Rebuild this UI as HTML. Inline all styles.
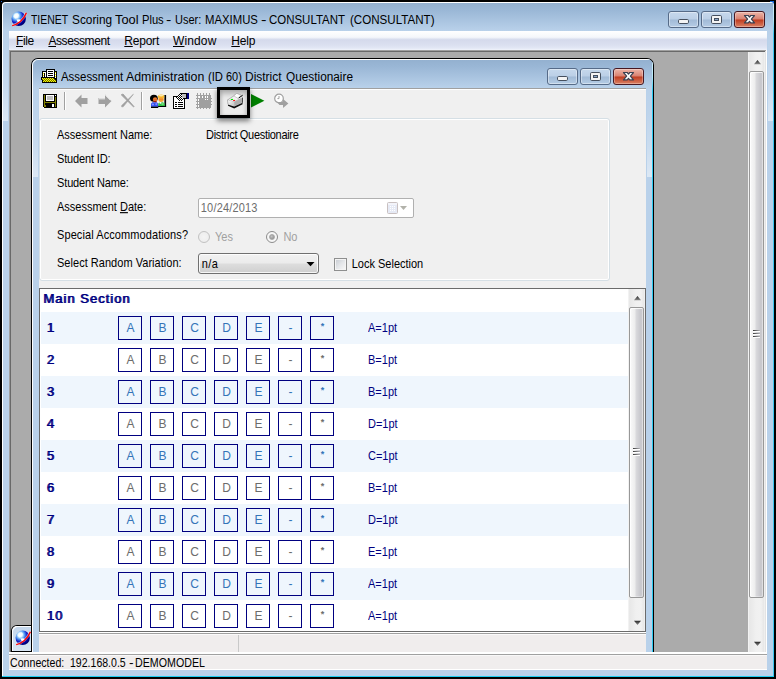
<!DOCTYPE html>
<html>
<head>
<meta charset="utf-8">
<title>TIENET Scoring Tool Plus</title>
<style>
html,body{margin:0;padding:0;background:#000;}
body{width:776px;height:679px;background:#000;overflow:hidden;position:relative;font-family:"Liberation Sans",sans-serif;font-size:11px;color:#000;}
.a{position:absolute;}
.t{position:absolute;white-space:nowrap;line-height:1;}
.ui{font-size:12px;}
.fh{position:absolute;width:5px;height:90px;background:linear-gradient(rgba(255,255,255,0) 0,rgba(255,255,255,.07) 30%,rgba(255,255,255,.24) 65%,rgba(255,255,255,.5) 100%);}
.w{position:absolute;top:0;white-space:pre;line-height:1;transform-origin:0 84.6%;}
.u{text-decoration:underline;}
#win{left:2px;top:2px;width:772px;height:675px;background:#b9d1ea;border-radius:4px 4px 0 0;overflow:hidden;}
#cap{left:0;top:0;width:772px;height:30px;background:linear-gradient(#93b0cf 0px,#9ab7d6 8px,#b9d1ea 29px);}
#hl{left:0;top:0;width:771px;height:674px;border-left:1px solid #fff;border-top:1px solid #fff;border-radius:4px 0 0 0;}
#cyr{right:0;top:0;width:1px;height:675px;background:linear-gradient(#d4f1fb 0,#b4e8f8 18px,#3cc7f0 32px);}
#cyb{left:0;bottom:0;width:772px;height:1px;background:#1ccdf2;}
.cb{position:absolute;width:29px;height:15px;border:1px solid #566b88;border-radius:3px;box-shadow:inset 0 0 0 1px rgba(255,255,255,.4);background:linear-gradient(#c6d8ec 0,#bbcfe6 48%,#a1bad6 52%,#b5cce5 100%);}
.cb.x{border-color:#471822;background:linear-gradient(#ecb5a8 0,#d9806f 48%,#bf3b1f 52%,#da8164 100%);box-shadow:inset 0 0 0 1px rgba(255,255,255,.3);}
.cb svg{position:absolute;left:0;top:0;}
#menu{left:9px;top:31px;width:758px;height:19px;background:linear-gradient(#ffffff 0,#f5f7fb 6px,#edf0f8 7px,#dadfef 8px,#d5daec 9px,#dbe0f0 14px,#e2e7f5 17px,#e9edf8 18px,#f0f3fa 19px);}
#mdi{left:9px;top:50px;width:758px;height:604px;background:#ababab;}
.sb{position:absolute;width:17px;background:linear-gradient(90deg,#fcfcfc 0,#e8e8e8 1px,#e9e9e9 3px,#f0f0f0 8px,#f1f1f1 13px,#e6e6e6 16px,#f8f8f8 17px);}
.thumb{position:absolute;left:1px;width:13px;border:1px solid #989898;border-radius:2px;background:linear-gradient(90deg,#fafafa 0,#ededed 5px,#dadadd 6px,#c6c6cb 11px,#d4d4d8 13px);box-shadow:inset 1px 1px 0 rgba(255,255,255,.8),inset -1px -1px 0 rgba(255,255,255,.3);}
.grip{position:absolute;left:3px;width:7px;height:9px;background:linear-gradient(#fff,#fff) 0 1px/7px 1px no-repeat,linear-gradient(#fff,#fff) 0 4px/7px 1px no-repeat,linear-gradient(#fff,#fff) 0 7px/7px 1px no-repeat,linear-gradient(90deg,#3a3a3a,#b4b4b8) 0 0/7px 1px no-repeat,linear-gradient(90deg,#3a3a3a,#b4b4b8) 0 3px/7px 1px no-repeat,linear-gradient(90deg,#3a3a3a,#b4b4b8) 0 6px/7px 1px no-repeat;}
#status{left:9px;top:655px;width:758px;height:15px;background:#f0eded;border-bottom:1px solid #fff;border-top:1px solid #f9f8f8;box-sizing:border-box;}
/* child */
#child{left:31px;top:58px;width:623px;height:594px;background:#000;border-radius:7px 7px 0 0;}
#cfr{left:32px;top:59px;width:621px;height:593px;background:#b9d1ea;border-radius:6px 6px 0 0;overflow:hidden;}
#ccap{left:0;top:0;width:621px;height:30px;background:linear-gradient(#93b0cf 0px,#9ab7d6 8px,#b9d1ea 29px);}
#chl{left:0;top:0;width:620px;height:592px;border-left:1px solid #fff;border-top:1px solid #fff;border-radius:6px 0 0 0;}
#ccy{right:0;top:0;width:1px;height:593px;background:linear-gradient(#d4f1fb 0,#b4e8f8 18px,#2ccaf1 32px);}
#cli{left:39px;top:88px;width:607px;height:564px;background:#f0f0f0;}
.sep{position:absolute;width:1px;height:18px;background:#a0a0a0;box-shadow:1px 0 0 #fff;}
#hib{left:217px;top:87px;width:27px;height:25px;border:3px solid #000;background:#ececec;box-shadow:0 3px 5px rgba(0,0,0,.5);z-index:5;}
#hib i{position:absolute;left:0;top:0;width:27px;height:25px;box-shadow:inset 0 4px 5px rgba(0,0,0,.24),inset 2px 0 3px rgba(0,0,0,.08),inset -2px 0 3px rgba(0,0,0,.05);}
#grp{left:39px;top:118px;width:569px;height:161px;border:1px solid #d5dfe5;border-radius:3px;box-shadow:inset 0 0 0 1px #fff;}
.lbl,.dis,.sy,.pt{transform:scaleY(1.13);transform-origin:0 9.3px;}
.lbl{color:#000;}
.dis{color:#a0a0a0;}
#date{left:198px;top:198px;width:214px;height:18px;border:1px solid #b0b0b0;border-radius:2px;background:#fff;}
#combo{left:198px;top:253px;width:119px;height:19px;border:1px solid #707070;border-radius:3px;background:linear-gradient(#f2f2f2 0,#ebebeb 48%,#dddddd 52%,#cfcfcf 100%);box-shadow:inset 0 0 0 1px rgba(255,255,255,.8);}
.radio{position:absolute;width:10px;height:10px;border:1px solid #c2c2c2;border-radius:50%;background:radial-gradient(circle at 50% 50%,#f4f4f4 0,#efefef 60%,#e4e4e4 100%);}
#chk{left:334px;top:258px;width:11px;height:11px;border:1px solid #8e8f8f;background:#f4f4f4;}
#chk i{position:absolute;left:1px;top:1px;width:9px;height:9px;background:linear-gradient(135deg,#cbcfd5 0,#e4e6e9 50%,#f6f6f6 100%);border:0;}
#list{left:39px;top:288px;width:605px;height:342px;border:1px solid #6b6b6b;background:#fff;box-shadow:0 1px 0 #fff;}
.row{position:absolute;left:41px;width:587px;height:32px;background:#eff6fd;}
.ab{position:absolute;width:22px;height:22px;border:1px solid #000080;text-align:center;line-height:22px;font-size:12px;text-indent:1px;}
.o .ab,.ab.o{color:#3474b8;}
.ab.e{color:#6c6c6c;}
.num{position:absolute;white-space:nowrap;line-height:1;font-size:13px;font-weight:normal;color:#000080;letter-spacing:1px;text-shadow:1px 0 0 #000080;}
.pt{position:absolute;white-space:nowrap;line-height:1;color:#000080;}
</style>
</head>
<body>
<div class="a" style="left:770px;top:1px;width:4px;height:4px;background:#1565d8"></div><div class="a" style="left:1px;top:1px;width:1px;height:1px;background:#1565d8"></div><div id="win" class="a"><div id="cap" class="a"></div><div id="hl" class="a"></div><div id="cyr" class="a"></div><div id="cyb" class="a"></div></div>
<div class="fh" style="left:3px;top:31px"></div><div class="fh" style="left:768px;top:31px"></div>
<svg class="a" style="left:11px;top:11px" width="17" height="16" viewBox="0 0 17 16">
<defs><radialGradient id="g1" cx="0.33" cy="0.3" r="0.75"><stop offset="0" stop-color="#ffffff"/><stop offset="0.22" stop-color="#c8ecff"/><stop offset="0.42" stop-color="#4a90f0"/><stop offset="0.62" stop-color="#1420c8"/><stop offset="0.85" stop-color="#000090"/><stop offset="1" stop-color="#000068"/></radialGradient></defs>
<circle cx="7.7" cy="7.8" r="7.2" fill="url(#g1)"/>
<path d="M2.5 5.5 L4 3 L6.5 2.2 L8 4 L6.8 6.5 L4.5 7.5 Z" fill="#ffffff" opacity=".75"/>
<path d="M5.5 8.6 L8.5 8.2 L10 9.6 L9 11.4 L6.6 11 Z" fill="#fff"/>
<path d="M1.4 14.2 C6.8 13.2 12.6 8.6 15.2 1.8" fill="none" stroke="#ffffff" stroke-width="2.4" opacity=".55"/>
<path d="M1.2 14.6 C6.8 13.6 12.8 9 15.4 1.8" fill="none" stroke="#ff0000" stroke-width="1.4"/>
</svg><div class="a ui" id="title" style="left:0;top:14px;width:0;height:0;"><span class="w" style="left:30.7px;transform:scale(0.8694,1.0)">TIENET </span><span class="w" style="left:71.7px;transform:scale(0.9856,1.0)">Scoring </span><span class="w" style="left:115.0px;transform:scale(1.0674,1.0)">Tool </span><span class="w" style="left:142.1px;transform:scale(0.9296,1.0)">Plus </span><span class="w" style="left:166.4px;transform:scale(1.3250,1.0)">- </span><span class="w" style="left:174.8px;transform:scale(0.9173,1.0)">User: </span><span class="w" style="left:204.6px;transform:scale(0.9444,1.0)">MAXIMUS </span><span class="w" style="left:261.4px;transform:scale(1.3750,1.0)">- </span><span class="w" style="left:269.2px;transform:scale(0.9552,1.0)">CONSULTANT </span><span class="w" style="left:349.5px;transform:scale(0.9650,1.0)">(CONSULTANT)</span></div>
<div class="cb" style="left:668px;top:11px"><svg width="29" height="15" viewBox="0 0 29 15"><rect x="9.5" y="7.5" width="10" height="4" rx="1.2" fill="#f4f4f4" stroke="#454f5e"/></svg></div><div class="cb" style="left:701px;top:11px"><svg width="29" height="15" viewBox="0 0 29 15"><rect x="9.5" y="3.5" width="10" height="8" rx="1.2" fill="#f4f4f4" stroke="#454f5e"/><rect x="12.5" y="6.5" width="4" height="2" fill="#8aa6c9" stroke="#454f5e"/></svg></div><div class="cb x" style="left:734px;top:11px"><svg width="29" height="15" viewBox="0 0 29 15"><path d="M9.5 3.5 H13.2 L14.5 5.1 L15.8 3.5 H19.5 L16.4 7.2 L19.5 10.9 H15.8 L14.5 9.3 L13.2 10.9 H9.5 L12.6 7.2 Z" fill="#fafafa" stroke="#3b4252" stroke-width="1.2" stroke-linejoin="round"/></svg></div>
<div id="menu" class="a"></div>
<div class="t ui" id="m_File" style="left:16px;top:35px;letter-spacing:-0.35px"><span class="u">F</span>ile</div><div class="t ui" id="m_Assessment" style="left:48.4px;top:35px;letter-spacing:-0.42px"><span class="u">A</span>ssessment</div><div class="t ui" id="m_Report" style="left:124.3px;top:35px;letter-spacing:-0.22px"><span class="u">R</span>eport</div><div class="t ui" id="m_Window" style="left:173px;top:35px;letter-spacing:0.13px"><span class="u">W</span>indow</div><div class="t ui" id="m_Help" style="left:231.3px;top:35px;letter-spacing:-0.15px"><span class="u">H</span>elp</div>
<div id="mdi" class="a"></div>
<div class="a" style="left:9px;top:50px;width:758px;height:1px;background:#a0a0a0"></div><div class="a" style="left:9px;top:50px;width:1px;height:602px;background:#a0a0a0"></div><div class="a" style="left:10px;top:51px;width:756px;height:1px;background:#696969"></div><div class="a" style="left:10px;top:51px;width:1px;height:601px;background:#696969"></div><div class="a" style="left:765px;top:51px;width:1px;height:602px;background:#e3e3e3"></div><div class="a" style="left:766px;top:50px;width:1px;height:604px;background:#fff"></div><div class="a" style="left:9px;top:652px;width:758px;height:2px;background:#fff"></div><div class="a" style="left:9px;top:654px;width:758px;height:1px;background:#a0a0a0"></div>
<div class="sb" style="left:748px;top:52px;height:600px"><svg class="a" style="left:0;top:1px" width="17" height="17" viewBox="0 0 17 17"><defs><linearGradient id="ag748" x1="0" y1="0" x2="0" y2="1"><stop offset="0" stop-color="#2a2a2a"/><stop offset="1" stop-color="#8a8a8a"/></linearGradient></defs><path d="M6 11.2 L9.5 7.1 L13 11.2 Z" fill="url(#ag748)"/></svg><svg class="a" style="left:0;top:583px" width="17" height="17" viewBox="0 0 17 17"><defs><linearGradient id="ah748" x1="0" y1="0" x2="0" y2="1"><stop offset="0" stop-color="#2a2a2a"/><stop offset="1" stop-color="#8a8a8a"/></linearGradient></defs><path d="M6 6.8 L9.5 10.9 L13 6.8 Z" fill="url(#ah748)"/></svg><div class="thumb" style="top:19px;height:525px"><div class="grip" style="top:258px"></div></div></div>
<div class="a" style="left:11px;top:625px;width:21px;height:27px;background:#000;border-radius:6px 0 0 0"></div><div class="a" style="left:12px;top:626px;width:19px;height:25px;background:linear-gradient(#c3d6ec,#d8e5f2);border-radius:5px 0 0 0;box-shadow:inset 1px 1px 0 #fff"></div><svg class="a" style="left:15px;top:630px" width="17" height="16" viewBox="0 0 17 16">
<defs><radialGradient id="g2" cx="0.33" cy="0.3" r="0.75"><stop offset="0" stop-color="#ffffff"/><stop offset="0.22" stop-color="#c8ecff"/><stop offset="0.42" stop-color="#4a90f0"/><stop offset="0.62" stop-color="#1420c8"/><stop offset="0.85" stop-color="#000090"/><stop offset="1" stop-color="#000068"/></radialGradient></defs>
<circle cx="7.7" cy="7.8" r="7.2" fill="url(#g2)"/>
<path d="M2.5 5.5 L4 3 L6.5 2.2 L8 4 L6.8 6.5 L4.5 7.5 Z" fill="#ffffff" opacity=".75"/>
<path d="M5.5 8.6 L8.5 8.2 L10 9.6 L9 11.4 L6.6 11 Z" fill="#fff"/>
<path d="M1.4 14.2 C6.8 13.2 12.6 8.6 15.2 1.8" fill="none" stroke="#ffffff" stroke-width="2.4" opacity=".55"/>
<path d="M1.2 14.6 C6.8 13.6 12.8 9 15.4 1.8" fill="none" stroke="#ff0000" stroke-width="1.4"/>
</svg>
<div id="status" class="a"></div><div class="a " id="st" style="left:0;top:658px;width:0;height:0;"><span class="w" style="left:10.4px;transform:scale(0.9651,1.13)">Connected: </span><span class="w" style="left:69.9px;transform:scale(0.9583,1.13)">192.168.0.5 </span><span class="w" style="left:128.6px;transform:scale(1.2528,1.13)">- </span><span class="w" style="left:135.4px;transform:scale(0.9705,1.13)">DEMOMODEL</span></div>
<div id="child" class="a"></div><div id="cfr" class="a"><div id="ccap" class="a"></div><div id="chl" class="a"></div><div id="ccy" class="a"></div></div>
<div class="fh" style="left:33px;top:87px"></div><div class="fh" style="left:647px;top:87px"></div>
<div id="cli" class="a"></div><div class="a" style="left:39px;top:88px;width:607px;height:1px;background:#a0a0a0"></div><div class="a" style="left:39px;top:89px;width:607px;height:1px;background:#fff"></div>
<svg class="a" style="left:41px;top:69px" width="16" height="14" viewBox="0 0 16 14" shape-rendering="crispEdges"><rect x="5" y="0" width="9" height="1" fill="#000"/><rect x="5" y="1" width="1" height="7" fill="#000"/><rect x="13" y="1" width="1" height="7" fill="#000"/><rect x="6" y="1" width="7" height="7" fill="#fff"/><rect x="7" y="2" width="5" height="1" fill="#000"/><rect x="7" y="4" width="5" height="1" fill="#000"/><rect x="7" y="6" width="5" height="1" fill="#000"/><rect x="1" y="2" width="4" height="1" fill="#000"/><rect x="1" y="3" width="1" height="6" fill="#000"/><rect x="2" y="3" width="3" height="1" fill="#fff"/><rect x="2" y="4" width="1" height="1" fill="#ffff00"/><rect x="2" y="5" width="1" height="1" fill="#fff"/><rect x="2" y="6" width="1" height="1" fill="#ffff00"/><rect x="2" y="7" width="1" height="1" fill="#fff"/><rect x="3" y="4" width="1" height="4" fill="#000"/><rect x="4" y="4" width="1" height="4" fill="#fff"/><rect x="14" y="2" width="2" height="1" fill="#000"/><rect x="15" y="3" width="1" height="11" fill="#000"/><rect x="14" y="3" width="1" height="1" fill="#ffff00"/><rect x="14" y="4" width="1" height="1" fill="#fff"/><rect x="14" y="5" width="1" height="1" fill="#ffff00"/><rect x="14" y="6" width="1" height="1" fill="#fff"/><rect x="14" y="7" width="1" height="1" fill="#ffff00"/><rect x="14" y="8" width="1" height="1" fill="#fff"/><rect x="14" y="9" width="1" height="1" fill="#000"/><rect x="0" y="8" width="14" height="1" fill="#000"/><rect x="0" y="9" width="15" height="2" fill="#000"/><rect x="1" y="11" width="14" height="2" fill="#000"/><rect x="1" y="13" width="15" height="1" fill="#000"/><rect x="1" y="9" width="1" height="1" fill="#ffff00"/><rect x="2" y="9" width="1" height="1" fill="#6a6a00"/><rect x="3" y="9" width="1" height="1" fill="#ffff00"/><rect x="4" y="9" width="1" height="1" fill="#6a6a00"/><rect x="5" y="9" width="1" height="1" fill="#ffff00"/><rect x="6" y="9" width="1" height="1" fill="#6a6a00"/><rect x="7" y="9" width="1" height="1" fill="#ffff00"/><rect x="8" y="9" width="1" height="1" fill="#6a6a00"/><rect x="9" y="9" width="1" height="1" fill="#ffff00"/><rect x="10" y="9" width="1" height="1" fill="#6a6a00"/><rect x="11" y="9" width="1" height="1" fill="#ffff00"/><rect x="12" y="9" width="1" height="1" fill="#6a6a00"/><rect x="1" y="10" width="1" height="1" fill="#6a6a00"/><rect x="2" y="10" width="1" height="1" fill="#ffff00"/><rect x="3" y="10" width="1" height="1" fill="#6a6a00"/><rect x="4" y="10" width="1" height="1" fill="#ffff00"/><rect x="5" y="10" width="1" height="1" fill="#6a6a00"/><rect x="6" y="10" width="1" height="1" fill="#ffff00"/><rect x="7" y="10" width="1" height="1" fill="#6a6a00"/><rect x="8" y="10" width="1" height="1" fill="#ffff00"/><rect x="9" y="10" width="1" height="1" fill="#6a6a00"/><rect x="10" y="10" width="1" height="1" fill="#ffff00"/><rect x="11" y="10" width="1" height="1" fill="#6a6a00"/><rect x="12" y="10" width="1" height="1" fill="#ffff00"/><rect x="13" y="10" width="1" height="1" fill="#6a6a00"/><rect x="2" y="11" width="1" height="1" fill="#6a6a00"/><rect x="3" y="11" width="1" height="1" fill="#ffff00"/><rect x="4" y="11" width="1" height="1" fill="#6a6a00"/><rect x="5" y="11" width="1" height="1" fill="#ffff00"/><rect x="6" y="11" width="1" height="1" fill="#6a6a00"/><rect x="7" y="11" width="1" height="1" fill="#ffff00"/><rect x="8" y="11" width="1" height="1" fill="#6a6a00"/><rect x="9" y="11" width="1" height="1" fill="#ffff00"/><rect x="10" y="11" width="1" height="1" fill="#6a6a00"/><rect x="11" y="11" width="1" height="1" fill="#ffff00"/><rect x="12" y="11" width="1" height="1" fill="#6a6a00"/><rect x="13" y="11" width="1" height="1" fill="#ffff00"/><rect x="14" y="11" width="1" height="1" fill="#6a6a00"/><rect x="2" y="12" width="1" height="1" fill="#ffff00"/><rect x="3" y="12" width="1" height="1" fill="#6a6a00"/><rect x="4" y="12" width="1" height="1" fill="#ffff00"/><rect x="5" y="12" width="1" height="1" fill="#6a6a00"/><rect x="6" y="12" width="1" height="1" fill="#ffff00"/><rect x="7" y="12" width="1" height="1" fill="#6a6a00"/><rect x="8" y="12" width="1" height="1" fill="#ffff00"/><rect x="9" y="12" width="1" height="1" fill="#6a6a00"/><rect x="10" y="12" width="1" height="1" fill="#ffff00"/><rect x="11" y="12" width="1" height="1" fill="#6a6a00"/><rect x="12" y="12" width="1" height="1" fill="#ffff00"/><rect x="13" y="12" width="1" height="1" fill="#6a6a00"/><rect x="14" y="12" width="1" height="1" fill="#ffff00"/></svg><div class="a ui" id="ctitle" style="left:0;top:71px;width:0;height:0;"><span class="w" style="left:60.7px;transform:scale(0.9517,1.0)">Assessment </span><span class="w" style="left:125.6px;transform:scale(1.0298,1.0)">Administration </span><span class="w" style="left:208.2px;transform:scale(0.9375,1.0)">(ID </span><span class="w" style="left:225.9px;transform:scale(0.9110,1.0)">60) </span><span class="w" style="left:245.3px;transform:scale(0.9980,1.0)">District </span><span class="w" style="left:285.7px;transform:scale(0.9846,1.0)">Questionaire</span></div>
<div class="cb" style="left:547px;top:68px"><svg width="29" height="15" viewBox="0 0 29 15"><rect x="9.5" y="7.5" width="10" height="4" rx="1.2" fill="#f4f4f4" stroke="#454f5e"/></svg></div><div class="cb" style="left:580px;top:68px"><svg width="29" height="15" viewBox="0 0 29 15"><rect x="9.5" y="3.5" width="10" height="8" rx="1.2" fill="#f4f4f4" stroke="#454f5e"/><rect x="12.5" y="6.5" width="4" height="2" fill="#8aa6c9" stroke="#454f5e"/></svg></div><div class="cb x" style="left:613px;top:68px"><svg width="29" height="15" viewBox="0 0 29 15"><path d="M9.5 3.5 H13.2 L14.5 5.1 L15.8 3.5 H19.5 L16.4 7.2 L19.5 10.9 H15.8 L14.5 9.3 L13.2 10.9 H9.5 L12.6 7.2 Z" fill="#fafafa" stroke="#3b4252" stroke-width="1.2" stroke-linejoin="round"/></svg></div>
<svg class="a" style="left:43px;top:94px" width="14" height="14" viewBox="0 0 14 14" shape-rendering="crispEdges"><rect x="0" y="0" width="14" height="14" fill="#000"/><rect x="1" y="1" width="1" height="12" fill="#808000"/><rect x="12" y="3" width="1" height="10" fill="#808000"/><rect x="2" y="8" width="10" height="1" fill="#808000"/><rect x="1" y="11" width="2" height="2" fill="#808000"/><rect x="3" y="1" width="8" height="6" fill="#fff"/><rect x="4" y="2" width="6" height="4" fill="#c0c0c0"/><rect x="12" y="1" width="1" height="1" fill="#fff"/><rect x="0" y="13" width="1" height="1" fill="#fff"/><rect x="9" y="10" width="2" height="3" fill="#fff"/></svg><div class="sep" style="left:64px;top:92px"></div><svg class="a" style="left:75px;top:94px" width="13" height="14" viewBox="0 0 13 14"><path d="M0 7 L6.5 0.5 L6.5 4 L12.5 4 L12.5 10 L6.5 10 L6.5 13.5 Z" fill="#a0a0a0"/></svg><svg class="a" style="left:98px;top:94px" width="14" height="14" viewBox="0 0 14 14"><path d="M13.5 7 L7 0.5 L7 4 L0.5 4 L0.5 10 L7 10 L7 13.5 Z" fill="#a0a0a0"/><path d="M7.5 1.2 L12.6 6.3 M1 4.8 L7 4.8" stroke="#fff" stroke-width="0.9" fill="none"/></svg><svg class="a" style="left:120px;top:93px" width="16" height="16" viewBox="0 0 16 16"><path d="M1.2 1.8 L3 1 L14 13.6 L13.6 14 L1.2 1.8 Z" fill="#a0a0a0" stroke="#a0a0a0" stroke-width="0.8"/><path d="M13.4 1.2 L3.4 13.6 L1.8 14 L1.6 12.6 Z" fill="#a0a0a0" stroke="#a0a0a0" stroke-width="0.6"/></svg><div class="sep" style="left:141px;top:92px"></div>
<svg class="a" style="left:150px;top:94px" width="17" height="15" viewBox="0 0 17 15">
<rect x="14.4" y="1" width="1.7" height="11.8" fill="#000"/>
<rect x="8" y="11.8" width="8.1" height="1.2" fill="#000"/>
<rect x="1" y="12.2" width="7.2" height="1.8" fill="#000"/>
<ellipse cx="3.9" cy="4.3" rx="3.9" ry="3.5" fill="#000"/>
<ellipse cx="5.1" cy="5.5" rx="2.2" ry="2.3" fill="#f08030"/>
<rect x="3.2" y="4.8" width="3.8" height="1.1" fill="#d86424"/>
<ellipse cx="5.1" cy="7.7" rx="1.7" ry="0.9" fill="#a01808"/>
<ellipse cx="11.1" cy="2.7" rx="3.2" ry="2.1" fill="#f8c030"/>
<ellipse cx="11.1" cy="1.6" rx="2.2" ry="0.8" fill="#fce8b0"/>
<ellipse cx="11.1" cy="5.6" rx="2.7" ry="2.3" fill="#f8a030"/>
<rect x="9.2" y="4.9" width="3.8" height="1" fill="#f08828"/>
<path d="M1 12.5 L1 10 C1.5 8.4 3.2 8 4.6 8.7 C6 8 7.7 8.4 8.2 10 L8.2 12.5 Z" fill="#3050f0"/>
<ellipse cx="2.9" cy="10.4" rx="1.1" ry="1" fill="#8890ff"/>
<ellipse cx="6.3" cy="10.2" rx="1" ry="1.1" fill="#8088ff"/>
<path d="M8.2 12 L8.3 9.6 C9.2 7.9 13.6 7.9 14.5 9.6 L14.8 12 Z" fill="#30c040"/>
<ellipse cx="12.6" cy="10" rx="1.4" ry="1.1" fill="#70e080"/>
<ellipse cx="10.5" cy="8.8" rx="1" ry="0.9" fill="#fff"/>
</svg><svg class="a" style="left:173px;top:93px" width="17" height="16" viewBox="0 0 17 16" shape-rendering="crispEdges"><rect x="0" y="3" width="1" height="13" fill="#000"/><rect x="0" y="15" width="12" height="1" fill="#000"/><rect x="11" y="6" width="1" height="10" fill="#000"/><rect x="0" y="3" width="4" height="1" fill="#000"/><rect x="1" y="4" width="10" height="11" fill="#fff"/><rect x="2" y="9" width="2" height="1" fill="#000"/><rect x="5" y="9" width="5" height="1" fill="#000"/><rect x="2" y="11" width="2" height="1" fill="#000"/><rect x="5" y="11" width="5" height="1" fill="#000"/><rect x="2" y="13" width="2" height="1" fill="#000"/><rect x="5" y="13" width="5" height="1" fill="#000"/><rect x="7" y="0" width="1" height="1" fill="#000"/><rect x="6" y="1" width="1" height="1" fill="#000"/><rect x="7" y="1" width="1" height="1" fill="#fff"/><rect x="8" y="1" width="1" height="1" fill="#000"/><rect x="5" y="2" width="1" height="1" fill="#000"/><rect x="6" y="2" width="1" height="1" fill="#fff"/><rect x="7" y="2" width="1" height="1" fill="#000"/><rect x="8" y="2" width="1" height="1" fill="#fff"/><rect x="9" y="2" width="1" height="1" fill="#000"/><rect x="4" y="3" width="1" height="1" fill="#000"/><rect x="5" y="3" width="1" height="1" fill="#fff"/><rect x="6" y="3" width="1" height="1" fill="#000"/><rect x="7" y="3" width="1" height="1" fill="#fff"/><rect x="8" y="3" width="1" height="1" fill="#000"/><rect x="9" y="3" width="1" height="1" fill="#fff"/><rect x="10" y="3" width="1" height="1" fill="#000"/><rect x="3" y="4" width="1" height="1" fill="#000"/><rect x="4" y="4" width="1" height="1" fill="#fff"/><rect x="5" y="4" width="1" height="1" fill="#000"/><rect x="6" y="4" width="1" height="1" fill="#fff"/><rect x="7" y="4" width="1" height="1" fill="#000"/><rect x="8" y="4" width="1" height="1" fill="#fff"/><rect x="9" y="4" width="1" height="1" fill="#000"/><rect x="10" y="4" width="1" height="1" fill="#fff"/><rect x="11" y="4" width="1" height="1" fill="#000"/><rect x="4" y="5" width="1" height="1" fill="#000"/><rect x="5" y="5" width="1" height="1" fill="#fff"/><rect x="6" y="5" width="1" height="1" fill="#000"/><rect x="7" y="5" width="1" height="1" fill="#fff"/><rect x="8" y="5" width="1" height="1" fill="#000"/><rect x="9" y="5" width="1" height="1" fill="#fff"/><rect x="10" y="5" width="1" height="1" fill="#000"/><rect x="5" y="6" width="1" height="1" fill="#000"/><rect x="6" y="6" width="1" height="1" fill="#fff"/><rect x="7" y="6" width="1" height="1" fill="#000"/><rect x="8" y="6" width="1" height="1" fill="#fff"/><rect x="9" y="6" width="1" height="1" fill="#000"/><rect x="6" y="7" width="1" height="1" fill="#000"/><rect x="7" y="7" width="1" height="1" fill="#fff"/><rect x="8" y="7" width="1" height="1" fill="#000"/><rect x="9" y="1" width="4" height="4" fill="#c0c0c0"/><rect x="7" y="0" width="7" height="1" fill="#000"/><rect x="11" y="5" width="3" height="1" fill="#000"/><rect x="13" y="1" width="1" height="4" fill="#000"/><rect x="14" y="0" width="2" height="6" fill="#000080"/></svg><svg class="a" style="left:196px;top:93px" width="16" height="16" viewBox="0 0 16 16" shape-rendering="crispEdges"><rect x="3" y="3" width="12" height="12" fill="#a0a0a0"/><rect x="1" y="0" width="1" height="16" fill="#a0a0a0"/><rect x="0" y="2" width="16" height="1" fill="#a0a0a0"/><rect x="4" y="0" width="1" height="16" fill="#a0a0a0"/><rect x="0" y="5" width="16" height="1" fill="#a0a0a0"/><rect x="7" y="0" width="1" height="16" fill="#a0a0a0"/><rect x="0" y="8" width="16" height="1" fill="#a0a0a0"/><rect x="10" y="0" width="1" height="16" fill="#a0a0a0"/><rect x="0" y="11" width="16" height="1" fill="#a0a0a0"/><rect x="13" y="0" width="1" height="16" fill="#a0a0a0"/><rect x="0" y="14" width="16" height="1" fill="#a0a0a0"/><rect x="3" y="3" width="1" height="2" fill="#fff"/><rect x="6" y="3" width="1" height="2" fill="#fff"/><rect x="9" y="3" width="1" height="2" fill="#fff"/><rect x="11" y="3" width="1" height="2" fill="#fff"/><rect x="9" y="6" width="1" height="1" fill="#fff"/><rect x="11" y="6" width="1" height="1" fill="#fff"/><rect x="2" y="6" width="1" height="2" fill="#fff"/><rect x="2" y="9" width="1" height="2" fill="#fff"/><rect x="2" y="12" width="1" height="2" fill="#fff"/><rect x="15" y="2" width="1" height="1" fill="#f0f0f0"/><rect x="15" y="14" width="1" height="1" fill="#f0f0f0"/></svg><div id="hib" class="a"><i></i></div><svg class="a" style="left:227px;top:93px;z-index:6" width="17" height="16" viewBox="0 0 17 16">
<defs><linearGradient id="pl" x1="0" y1="0" x2="1" y2="1"><stop offset="0" stop-color="#ffffff"/><stop offset="1" stop-color="#bdbdbd"/></linearGradient></defs>
<path d="M0.5 7 L6.6 3 L9.7 0.4 L14 2.3 L15.5 4.8 L7.2 8.9 Z" fill="#f3f3f3" stroke="#8e8e8e" stroke-width=".6"/>
<path d="M6.8 2.9 L9.7 0.4 L14 2.3 L11 5.4 Z" fill="#ffffff" stroke="#a0a0a0" stroke-width=".5"/>
<path d="M0.5 7 L7.2 8.9 L7.2 13.3 L0.9 11 Z" fill="url(#pl)"/>
<path d="M7.2 8.9 L15.5 4.8 L15.5 9.6 L7.2 13.3 Z" fill="#adadad"/>
<path d="M0.5 7 L0.9 11.4 L7.2 13.6 L15.5 9.8 L15.6 11.2 L7.2 15.5 L1 12.8 Z" fill="#0c0c0c"/>
<path d="M0.5 7 L0.9 11" stroke="#8e8e8e" stroke-width=".6"/>
<path d="M11.7 5 L15.7 2.2" stroke="#000" stroke-width="1"/>
<path d="M15.5 4.8 L15.5 9.8" stroke="#222" stroke-width=".8"/>
<rect x="3.8" y="5.9" width="2.2" height="1.1" fill="#00e000"/>
<rect x="6.1" y="6.9" width="2" height="1.1" fill="#ff1010"/>
</svg><svg class="a" style="left:251px;top:94px" width="14" height="14" viewBox="0 0 14 14"><path d="M0 0 L13.4 6.7 L0 13.4 Z" fill="#008000"/></svg><svg class="a" style="left:274px;top:93px" width="15" height="16" viewBox="0 0 15 16">
<circle cx="5" cy="5.5" r="4.3" fill="#fff" stroke="#a0a0a0" stroke-width="1.2"/>
<path d="M5 3 L5 5.6 L3.4 5.6" fill="none" stroke="#a0a0a0" stroke-width="1"/>
<path d="M3 9 L9 9 L9 6 L14.4 10.5 L9 15 L9 12 L5.5 12 Z" fill="#a0a0a0"/>
</svg>
<div id="grp" class="a"></div>
<div class="t lbl" id="l0" style="left:57px;top:130px;letter-spacing:0px">Assessment Name:</div><div class="t lbl" id="l1" style="left:57px;top:154px;letter-spacing:-0.15px">Student ID:</div><div class="t lbl" id="l2" style="left:57px;top:178px;letter-spacing:-0.13px">Student Name:</div><div class="t lbl" id="l3" style="left:57px;top:202px;letter-spacing:0px">Assessment <span class="u">D</span>ate:</div><div class="t lbl" id="l4" style="left:57px;top:230px;letter-spacing:0.09px">Special Accommodations?</div><div class="t lbl" id="l5" style="left:57px;top:258px;letter-spacing:0.03px">Select Random Variation:</div><div class="t lbl" id="dq" style="left:206px;top:130px;letter-spacing:-0.31px">District Questionaire</div>
<div id="date" class="a"></div><div class="t dis" id="dt" style="left:200.8px;top:203px;color:#6d6d6d;letter-spacing:0.18px">10/24/2013</div><svg class="a" style="left:387px;top:202px" width="22" height="12" viewBox="0 0 22 12">
<rect x="0.5" y="0.5" width="10" height="11" rx="1" fill="#e6eaf5" stroke="#c9c0c0"/>
<rect x="1" y="1" width="9" height="2" fill="#f3f4fa"/>
<g fill="#fff"><rect x="3" y="4" width="1" height="1"/><rect x="5" y="4" width="1" height="1"/><rect x="7" y="4" width="1" height="1"/><rect x="3" y="6" width="1" height="1"/><rect x="5" y="6" width="1" height="1"/><rect x="7" y="6" width="1" height="1"/><rect x="3" y="8" width="1" height="1"/><rect x="5" y="8" width="1" height="1"/><rect x="7" y="8" width="1" height="1"/></g>
<path d="M13 4 L20 4 L16.5 8 Z" fill="#b2b2aa"/>
</svg><div class="radio" style="left:198px;top:231px"></div><div class="t dis" id="yes" style="left:215px;top:232px;">Yes</div><div class="radio" style="left:266px;top:231px;border-color:#8c8c8c;background:#f6f6f6"><div class="a" style="left:2px;top:2px;width:4px;height:4px;border:1px solid #a8a8a8;border-radius:50%;background:radial-gradient(circle at 40% 35%,#c4c4c4,#858585)"></div></div><div class="t dis" id="no" style="left:283.4px;top:232px;">No</div><div id="combo" class="a"></div><div class="t sy" id="na" style="left:201.7px;top:259px;letter-spacing:0.4px">n/a</div><svg class="a" style="left:306px;top:261px" width="9" height="6" viewBox="0 0 9 6"><path d="M0.5 1 L8.5 1 L4.5 5.2 Z" fill="#000"/></svg><div id="chk" class="a"><i></i></div><div class="t sy" id="lock" style="left:351.7px;top:259px;">Lock Selection</div>
<div id="list" class="a"></div>
<div class="num" id="ms" style="left:43px;top:292px;">Main Section</div>
<div class="row" style="top:312px"></div><div class="num" id="n1" style="left:46.5px;top:321px;">1</div><div class="ab o" style="left:118px;top:316px">A</div><div class="ab o" style="left:150px;top:316px">B</div><div class="ab o" style="left:182px;top:316px">C</div><div class="ab o" style="left:214px;top:316px">D</div><div class="ab o" style="left:246px;top:316px">E</div><div class="ab o" style="left:278px;top:316px">-</div><div class="ab o" style="left:310px;top:316px"><span style="position:relative;top:-3px;font-size:9px;font-weight:bold">*</span></div><div class="pt" style="left:368px;top:323px;">A=1pt</div>
<div class="num" id="n2" style="left:46.5px;top:353px;">2</div><div class="ab e" style="left:118px;top:348px">A</div><div class="ab e" style="left:150px;top:348px">B</div><div class="ab e" style="left:182px;top:348px">C</div><div class="ab e" style="left:214px;top:348px">D</div><div class="ab e" style="left:246px;top:348px">E</div><div class="ab e" style="left:278px;top:348px">-</div><div class="ab e" style="left:310px;top:348px"><span style="position:relative;top:-3px;font-size:9px;font-weight:bold">*</span></div><div class="pt" style="left:368px;top:355px;">B=1pt</div>
<div class="row" style="top:376px"></div><div class="num" id="n3" style="left:46.5px;top:385px;">3</div><div class="ab o" style="left:118px;top:380px">A</div><div class="ab o" style="left:150px;top:380px">B</div><div class="ab o" style="left:182px;top:380px">C</div><div class="ab o" style="left:214px;top:380px">D</div><div class="ab o" style="left:246px;top:380px">E</div><div class="ab o" style="left:278px;top:380px">-</div><div class="ab o" style="left:310px;top:380px"><span style="position:relative;top:-3px;font-size:9px;font-weight:bold">*</span></div><div class="pt" style="left:368px;top:387px;">B=1pt</div>
<div class="num" id="n4" style="left:46.5px;top:417px;">4</div><div class="ab e" style="left:118px;top:412px">A</div><div class="ab e" style="left:150px;top:412px">B</div><div class="ab e" style="left:182px;top:412px">C</div><div class="ab e" style="left:214px;top:412px">D</div><div class="ab e" style="left:246px;top:412px">E</div><div class="ab e" style="left:278px;top:412px">-</div><div class="ab e" style="left:310px;top:412px"><span style="position:relative;top:-3px;font-size:9px;font-weight:bold">*</span></div><div class="pt" style="left:368px;top:419px;">D=1pt</div>
<div class="row" style="top:440px"></div><div class="num" id="n5" style="left:46.5px;top:449px;">5</div><div class="ab o" style="left:118px;top:444px">A</div><div class="ab o" style="left:150px;top:444px">B</div><div class="ab o" style="left:182px;top:444px">C</div><div class="ab o" style="left:214px;top:444px">D</div><div class="ab o" style="left:246px;top:444px">E</div><div class="ab o" style="left:278px;top:444px">-</div><div class="ab o" style="left:310px;top:444px"><span style="position:relative;top:-3px;font-size:9px;font-weight:bold">*</span></div><div class="pt" style="left:368px;top:451px;">C=1pt</div>
<div class="num" id="n6" style="left:46.5px;top:481px;">6</div><div class="ab e" style="left:118px;top:476px">A</div><div class="ab e" style="left:150px;top:476px">B</div><div class="ab e" style="left:182px;top:476px">C</div><div class="ab e" style="left:214px;top:476px">D</div><div class="ab e" style="left:246px;top:476px">E</div><div class="ab e" style="left:278px;top:476px">-</div><div class="ab e" style="left:310px;top:476px"><span style="position:relative;top:-3px;font-size:9px;font-weight:bold">*</span></div><div class="pt" style="left:368px;top:483px;">B=1pt</div>
<div class="row" style="top:504px"></div><div class="num" id="n7" style="left:46.5px;top:513px;">7</div><div class="ab o" style="left:118px;top:508px">A</div><div class="ab o" style="left:150px;top:508px">B</div><div class="ab o" style="left:182px;top:508px">C</div><div class="ab o" style="left:214px;top:508px">D</div><div class="ab o" style="left:246px;top:508px">E</div><div class="ab o" style="left:278px;top:508px">-</div><div class="ab o" style="left:310px;top:508px"><span style="position:relative;top:-3px;font-size:9px;font-weight:bold">*</span></div><div class="pt" style="left:368px;top:515px;">D=1pt</div>
<div class="num" id="n8" style="left:46.5px;top:545px;">8</div><div class="ab e" style="left:118px;top:540px">A</div><div class="ab e" style="left:150px;top:540px">B</div><div class="ab e" style="left:182px;top:540px">C</div><div class="ab e" style="left:214px;top:540px">D</div><div class="ab e" style="left:246px;top:540px">E</div><div class="ab e" style="left:278px;top:540px">-</div><div class="ab e" style="left:310px;top:540px"><span style="position:relative;top:-3px;font-size:9px;font-weight:bold">*</span></div><div class="pt" style="left:368px;top:547px;">E=1pt</div>
<div class="row" style="top:568px"></div><div class="num" id="n9" style="left:46.5px;top:577px;">9</div><div class="ab o" style="left:118px;top:572px">A</div><div class="ab o" style="left:150px;top:572px">B</div><div class="ab o" style="left:182px;top:572px">C</div><div class="ab o" style="left:214px;top:572px">D</div><div class="ab o" style="left:246px;top:572px">E</div><div class="ab o" style="left:278px;top:572px">-</div><div class="ab o" style="left:310px;top:572px"><span style="position:relative;top:-3px;font-size:9px;font-weight:bold">*</span></div><div class="pt" style="left:368px;top:579px;">A=1pt</div>
<div class="num" id="n10" style="left:46.5px;top:609px;">10</div><div class="ab e" style="left:118px;top:604px">A</div><div class="ab e" style="left:150px;top:604px">B</div><div class="ab e" style="left:182px;top:604px">C</div><div class="ab e" style="left:214px;top:604px">D</div><div class="ab e" style="left:246px;top:604px">E</div><div class="ab e" style="left:278px;top:604px">-</div><div class="ab e" style="left:310px;top:604px"><span style="position:relative;top:-3px;font-size:9px;font-weight:bold">*</span></div><div class="pt" style="left:368px;top:611px;">A=1pt</div>
<div class="sb" style="left:628px;top:289px;height:342px"><svg class="a" style="left:0;top:0px" width="17" height="17" viewBox="0 0 17 17"><defs><linearGradient id="ag628" x1="0" y1="0" x2="0" y2="1"><stop offset="0" stop-color="#2a2a2a"/><stop offset="1" stop-color="#8a8a8a"/></linearGradient></defs><path d="M6 11.2 L9.5 7.1 L13 11.2 Z" fill="url(#ag628)"/></svg><svg class="a" style="left:0;top:325px" width="17" height="17" viewBox="0 0 17 17"><defs><linearGradient id="ah628" x1="0" y1="0" x2="0" y2="1"><stop offset="0" stop-color="#2a2a2a"/><stop offset="1" stop-color="#8a8a8a"/></linearGradient></defs><path d="M6 6.8 L9.5 10.9 L13 6.8 Z" fill="url(#ah628)"/></svg><div class="thumb" style="top:18px;height:289px"><div class="grip" style="top:140px"></div></div></div>
<div class="a" style="left:39px;top:633px;width:607px;height:19px;background:#f0eded;border-top:1px solid #a0a0a0;box-sizing:border-box"></div><div class="a" style="left:39px;top:634px;width:607px;height:1px;background:#fbfafa"></div><div class="a" style="left:238px;top:635px;width:1px;height:17px;background:#c9c9c9"></div>
</body>
</html>
